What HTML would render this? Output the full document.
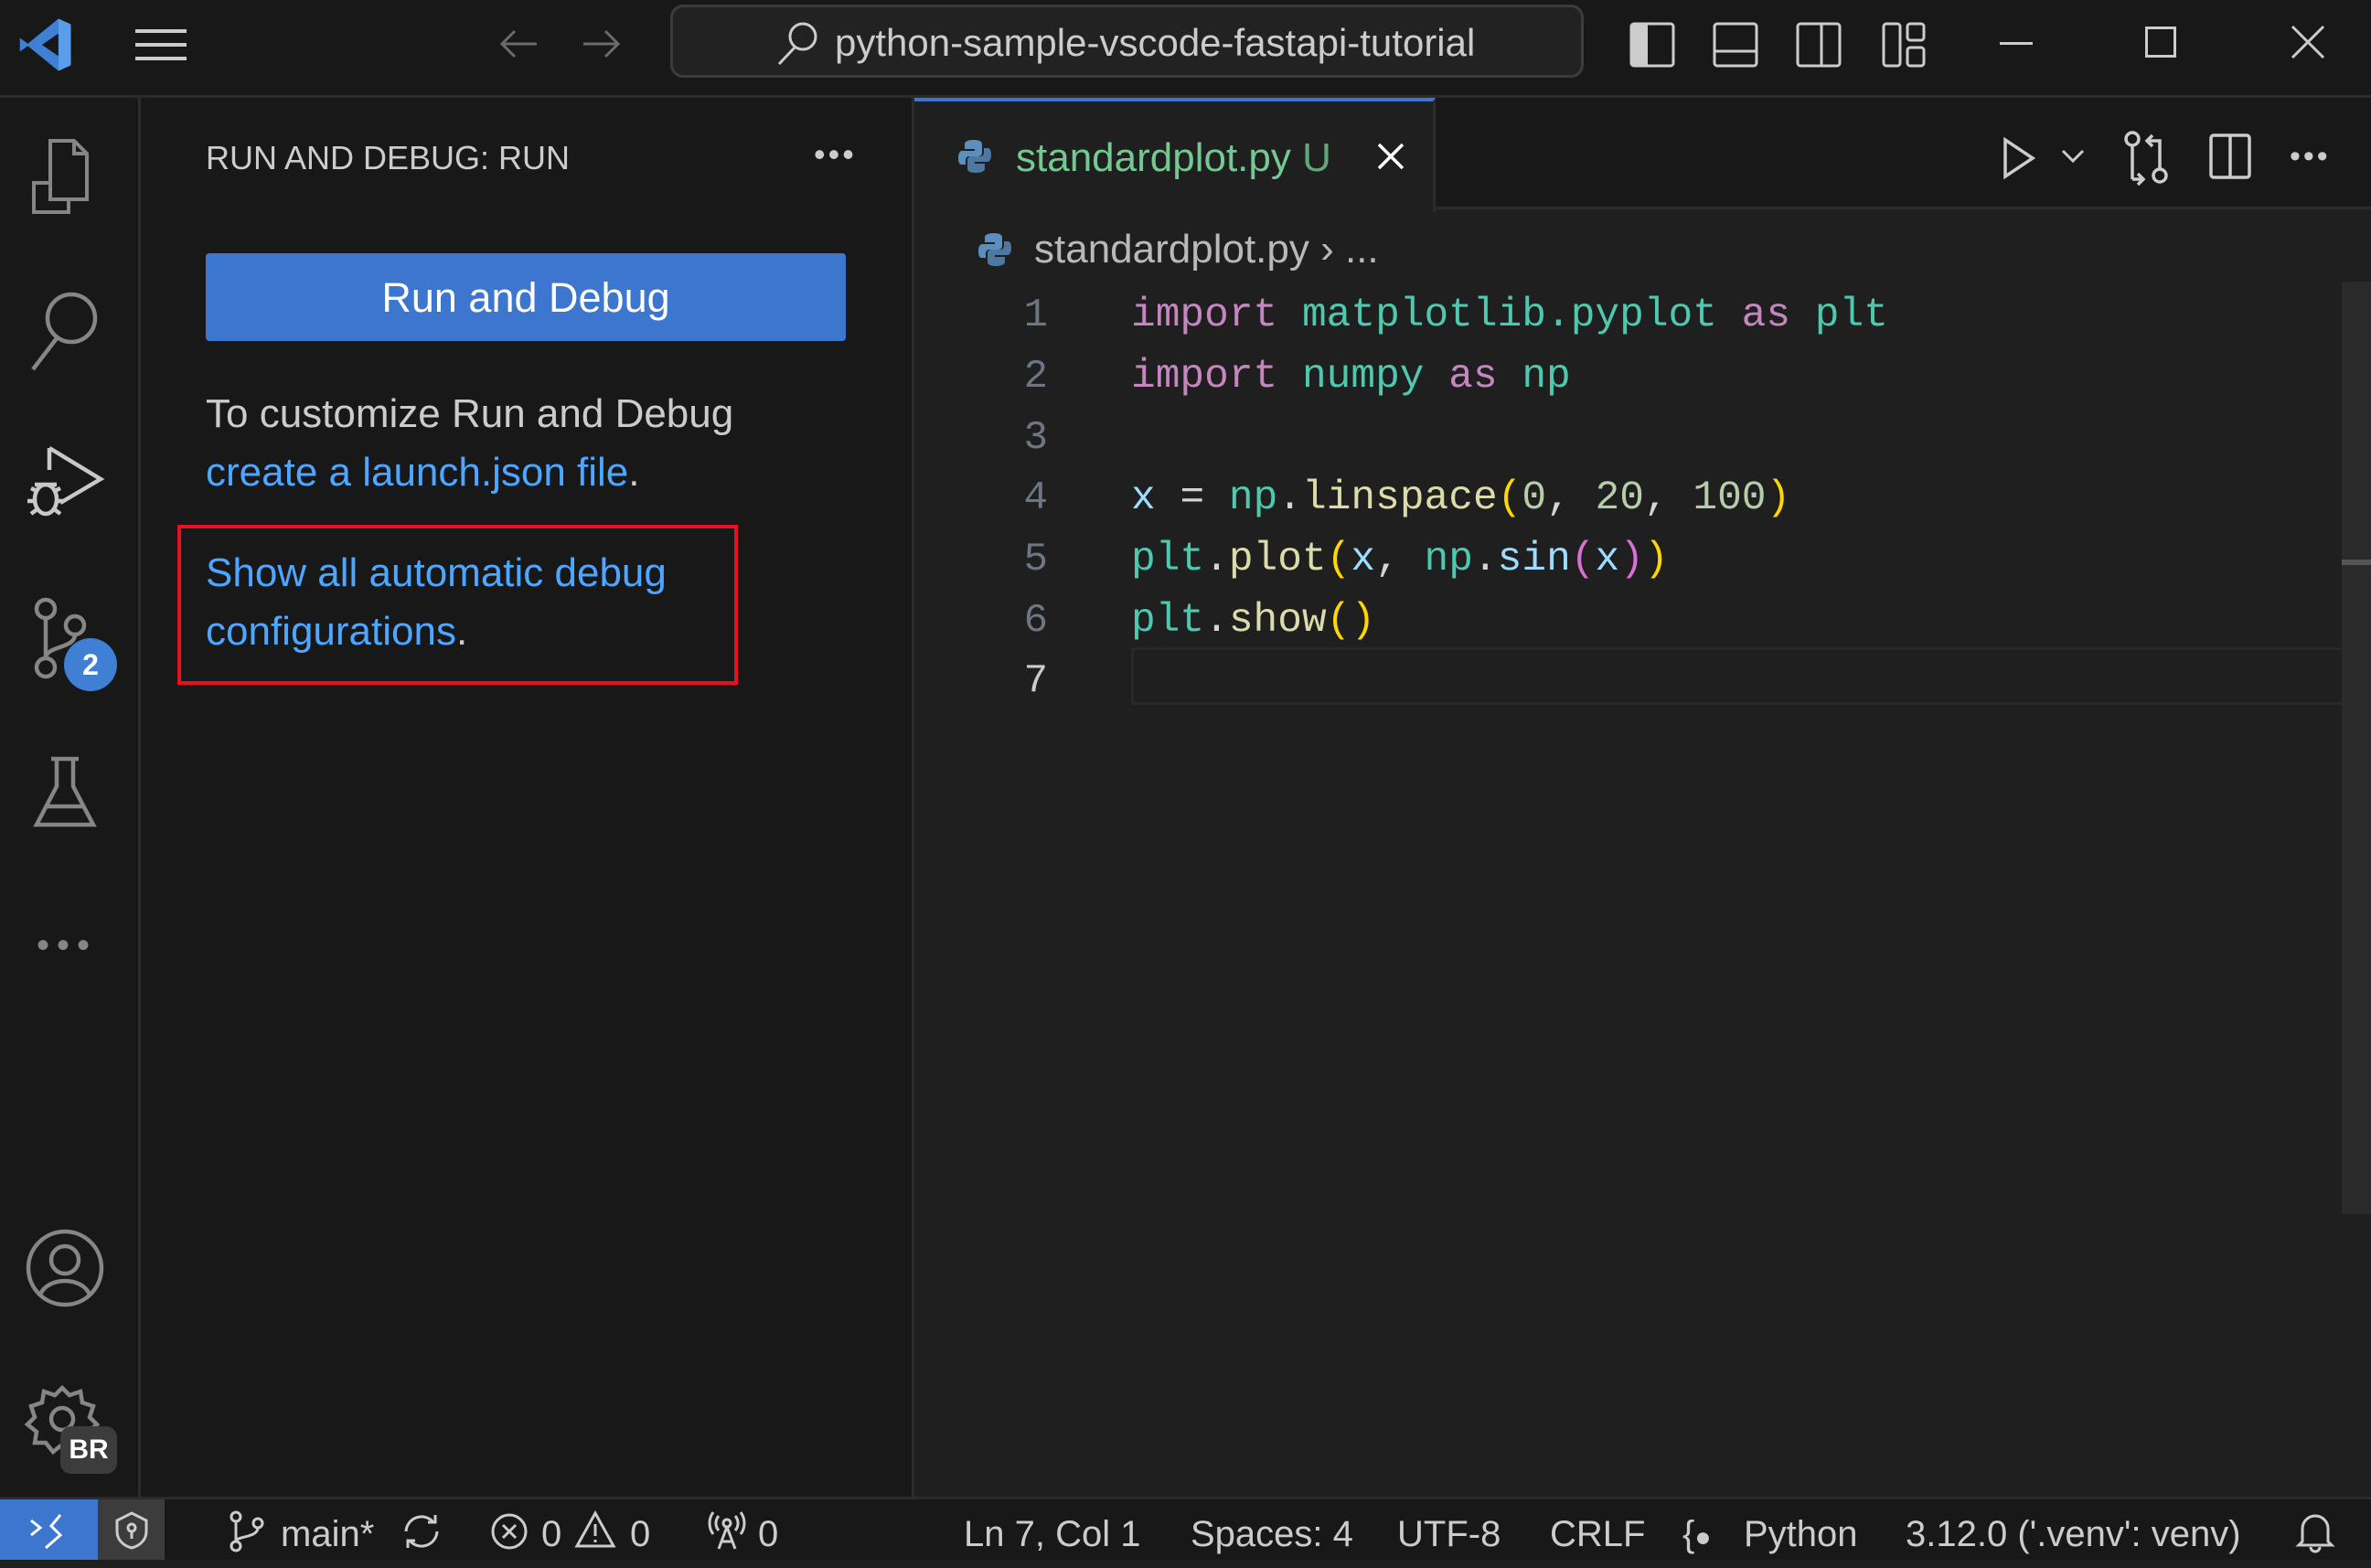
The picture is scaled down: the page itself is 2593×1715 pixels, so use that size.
<!DOCTYPE html>
<html><head><meta charset="utf-8"><style>
*{margin:0;padding:0;box-sizing:border-box}
body{width:2593px;height:1706px;background:#1f1f1f;position:relative;overflow:hidden;font-family:"Liberation Sans",sans-serif;color:#ccc}
.a{position:absolute}
.mono{font-family:"Liberation Mono","DejaVu Sans Mono",monospace;font-size:44.5px;white-space:pre}
.ln{position:absolute;left:1100px;width:46px;text-align:right;color:#6e7681;font-family:"Liberation Mono",monospace;font-size:44px}
.code{position:absolute;left:1237px}
.k{color:#c586c0}.m{color:#4ec9b0}.v{color:#9cdcfe}.f{color:#dcdcaa}.n{color:#b5cea8}.y{color:#ffd700}.p{color:#da70d6}.w{color:#d4d4d4}
svg{position:absolute;overflow:visible}
.st{position:absolute;top:1645px;height:66px;line-height:66px;font-size:40px;color:#ccc;white-space:nowrap}
</style></head><body>
<!-- title bar -->
<div class="a" style="left:0;top:0;width:2593px;height:107px;background:#181818;border-bottom:3px solid #2b2b2b"></div>
<svg style="left:18px;top:18px" width="62" height="62" viewBox="0 0 100 100"><path d="M74 4 L96 14 V86 L74 96 L20 52 L6 62 V38 L20 48 Z" fill="#3f7fd4"/><path d="M74 4 L96 14 V86 L74 96 Z" fill="#5a9de8"/><path d="M74 30 V70 L45 50 Z" fill="#181818"/></svg>
<div class="a" style="left:148px;top:32px;width:56px;height:4px;background:#ccc;box-shadow:0 15px 0 #ccc,0 30px 0 #ccc"></div>
<svg style="left:545px;top:28px" width="44" height="40"><path d="M42 20 H4 M18 6 L4 20 L18 34" stroke="#6b6b6b" stroke-width="3" fill="none"/></svg>
<svg style="left:636px;top:28px" width="44" height="40"><path d="M2 20 H40 M26 6 L40 20 L26 34" stroke="#6b6b6b" stroke-width="3" fill="none"/></svg>
<div class="a" style="left:733px;top:5px;width:999px;height:80px;border:3px solid #3c3c3c;border-radius:14px;background:#222"></div>
<svg style="left:848px;top:22px" width="48" height="50"><circle cx="30" cy="18" r="14" stroke="#ccc" stroke-width="3" fill="none"/><path d="M21 30 L4 48" stroke="#ccc" stroke-width="3"/></svg>
<div class="a" style="left:913px;top:23px;font-size:42px;color:#ccc">python-sample-vscode-fastapi-tutorial</div>
<svg style="left:1782px;top:24px" width="50" height="50"><rect x="2" y="2" width="46" height="46" rx="3" stroke="#ccc" stroke-width="3" fill="none"/><rect x="2" y="2" width="18" height="46" fill="#ccc"/></svg>
<svg style="left:1873px;top:24px" width="50" height="50"><rect x="2" y="2" width="46" height="46" rx="3" stroke="#ccc" stroke-width="3" fill="none"/><path d="M2 32 H48" stroke="#ccc" stroke-width="3"/></svg>
<svg style="left:1964px;top:24px" width="50" height="50"><rect x="2" y="2" width="46" height="46" rx="3" stroke="#ccc" stroke-width="3" fill="none"/><path d="M28 2 V48" stroke="#ccc" stroke-width="3"/></svg>
<svg style="left:2058px;top:24px" width="50" height="50"><rect x="2" y="2" width="18" height="46" rx="3" stroke="#ccc" stroke-width="3" fill="none"/><rect x="28" y="2" width="18" height="18" rx="3" stroke="#ccc" stroke-width="3" fill="none"/><rect x="28" y="28" width="18" height="20" rx="3" stroke="#ccc" stroke-width="3" fill="none"/></svg>
<div class="a" style="left:2187px;top:46px;width:36px;height:3px;background:#ccc"></div>
<div class="a" style="left:2346px;top:29px;width:34px;height:34px;border:3px solid #ccc"></div>
<svg style="left:2505px;top:27px" width="38" height="38"><path d="M2 2 L36 36 M36 2 L2 36" stroke="#ccc" stroke-width="3"/></svg>

<!-- activity bar -->
<div class="a" style="left:0;top:107px;width:154px;height:1533px;background:#181818;border-right:3px solid #2b2b2b"></div>
<svg style="left:33px;top:148px" width="76" height="90" viewBox="0 0 76 86" fill="none" stroke="#868686" stroke-width="4"><path d="M22 50 H4 V82 H42 V70"/><path d="M22 4 H48 L62 18 V68 H22 Z"/><path d="M48 4 V18 H62"/></svg>
<svg style="left:30px;top:318px" width="80" height="90" fill="none" stroke="#868686" stroke-width="4.5"><circle cx="48" cy="30" r="26"/><path d="M32 52 L6 86"/></svg>
<svg style="left:26px;top:484px" width="90" height="90" fill="none" stroke="#c8c8c8" stroke-width="4.5"><path d="M28 6 L84 40 L40 66"/><path d="M28 6 V30"/><ellipse cx="24" cy="62" rx="12" ry="16"/><path d="M8 50 L16 54 M40 50 L32 54 M4 64 H12 M36 64 H44 M8 78 L16 72 M40 78 L32 72 M12 46 H36"/></svg>
<svg style="left:36px;top:654px" width="60" height="90" fill="none" stroke="#868686" stroke-width="4.5"><circle cx="14" cy="12" r="10"/><circle cx="14" cy="76" r="10"/><circle cx="46" cy="30" r="10"/><path d="M14 22 V66 M46 40 C46 56 14 52 14 66"/></svg>
<div class="a" style="left:70px;top:698px;width:58px;height:58px;border-radius:50%;background:#3f7fd4;color:#fff;font-size:32px;text-align:center;line-height:58px;font-weight:bold">2</div>
<svg style="left:36px;top:826px" width="70" height="80" fill="none" stroke="#868686" stroke-width="4.5"><path d="M20 4 H50 M26 4 V34 L4 76 H66 L44 34 V4 M14 56 H56"/></svg>
<div class="a" style="left:40px;top:1012px;font-size:40px;color:#868686;letter-spacing:8px">•••</div>
<svg style="left:28px;top:1344px" width="86" height="86" fill="none" stroke="#868686" stroke-width="4.5"><circle cx="43" cy="43" r="40"/><circle cx="43" cy="34" r="15"/><path d="M16 72 C24 52 62 52 70 72"/></svg>
<svg style="left:28px;top:1512px" width="86" height="86" fill="none" stroke="#868686" stroke-width="4.5"><circle cx="40" cy="40" r="12"/><path d="M40 6 L48 14 L60 10 L62 22 L74 26 L70 38 L78 46 L68 54 L70 66 L58 66 L50 76 L40 68 L30 76 L22 66 L10 66 L12 54 L2 46 L10 38 L6 26 L18 22 L20 10 L32 14 Z"/></svg>
<div class="a" style="left:66px;top:1560px;width:62px;height:52px;border-radius:12px;background:#3c3c3c;color:#fff;font-size:30px;font-weight:bold;text-align:center;line-height:52px">BR</div>

<!-- sidebar -->
<div class="a" style="left:154px;top:107px;width:846px;height:1533px;background:#181818;border-right:3px solid #2b2b2b"></div>
<div class="a" style="left:225px;top:152px;font-size:36px;color:#ccc">RUN AND DEBUG: RUN</div>
<div class="a" style="left:890px;top:148px;font-size:36px;color:#ccc;letter-spacing:3px">•••</div>
<div class="a" style="left:225px;top:277px;width:700px;height:96px;background:#3d76cf;border-radius:4px;color:#fff;font-size:45px;text-align:center;line-height:98px">Run and Debug</div>
<div class="a" style="left:225px;top:421px;font-size:44px;color:#ccc;line-height:64px">To customize Run and Debug<br><span style="color:#4da6ff">create a launch.json file</span>.</div>
<div class="a" style="left:194px;top:574px;width:613px;height:175px;border:4px solid #e81123"></div>
<div class="a" style="left:225px;top:595px;font-size:44px;color:#4da6ff;line-height:64px">Show all automatic debug<br>configurations<span style="color:#ccc">.</span></div>

<!-- tab bar -->
<div class="a" style="left:1000px;top:107px;width:1593px;height:122px;background:#181818;border-bottom:3px solid #2b2b2b"></div>
<div class="a" style="left:1000px;top:107px;width:570px;height:125px;background:#1f1f1f;border-top:4px solid #3d76cf;border-right:3px solid #2b2b2b"></div>
<svg style="left:1048px;top:152px" width="36" height="38" viewBox="0 0 36 38"><path d="M17 1 C6 1 7 6 7 6 V11 H18 V13 H4 C4 13 0 13 0 21 C0 29 4 28 4 28 H8 V23 C8 23 8 19 12 19 H22 C22 19 26 19 26 15 V6 C26 6 27 1 17 1 Z" fill="#5a8fbf"/><path d="M19 37 C30 37 29 32 29 32 V27 H18 V25 H32 C32 25 36 25 36 17 C36 9 32 10 32 10 H28 V15 C28 15 28 19 24 19 H14 C14 19 10 19 10 23 V32 C10 32 9 37 19 37 Z" fill="#5a8fbf" opacity=".8"/></svg>
<div class="a" style="left:1111px;top:148px;font-size:44px;color:#73c991">standardplot.py <span style="color:#73c991;opacity:.8">U</span></div>
<svg style="left:1506px;top:156px" width="30" height="30"><path d="M2 2 L28 28 M28 2 L2 28" stroke="#fff" stroke-width="3.5"/></svg>
<svg style="left:2190px;top:150px" width="36" height="46"><path d="M3 3 L33 23 L3 43 Z" stroke="#ccc" stroke-width="3.5" fill="none"/></svg>
<svg style="left:2254px;top:163px" width="26" height="16"><path d="M2 2 L13 13 L24 2" stroke="#ccc" stroke-width="3" fill="none"/></svg>
<svg style="left:2322px;top:142px" width="52" height="60" fill="none" stroke="#ccc" stroke-width="3.5"><circle cx="10" cy="10" r="7"/><circle cx="40" cy="50" r="7"/><path d="M10 17 V54 M40 43 V12 H26 M32 6 L26 12 L32 18 M10 54 H22 M16 48 L22 54 L16 60"/></svg>
<svg style="left:2416px;top:146px" width="46" height="50"><rect x="2" y="2" width="42" height="46" rx="3" stroke="#ccc" stroke-width="3.5" fill="none"/><path d="M23 2 V48" stroke="#ccc" stroke-width="3.5"/></svg>
<div class="a" style="left:2504px;top:152px;font-size:34px;color:#ccc;letter-spacing:3px">•••</div>

<!-- breadcrumb -->
<svg style="left:1070px;top:254px" width="36" height="38" viewBox="0 0 36 38"><path d="M17 1 C6 1 7 6 7 6 V11 H18 V13 H4 C4 13 0 13 0 21 C0 29 4 28 4 28 H8 V23 C8 23 8 19 12 19 H22 C22 19 26 19 26 15 V6 C26 6 27 1 17 1 Z" fill="#5a8fbf"/><path d="M19 37 C30 37 29 32 29 32 V27 H18 V25 H32 C32 25 36 25 36 17 C36 9 32 10 32 10 H28 V15 C28 15 28 19 24 19 H14 C14 19 10 19 10 23 V32 C10 32 9 37 19 37 Z" fill="#5a8fbf" opacity=".8"/></svg>
<div class="a" style="left:1131px;top:248px;font-size:44px;color:#b9b9b9">standardplot.py <span>›</span> ...</div>

<!-- code -->
<div class="a" style="left:1237px;top:708px;width:1340px;height:63px;border:3px solid #282828;border-right:none"></div>
<div class="ln" style="top:320px">1</div>
<div class="ln" style="top:387px">2</div>
<div class="ln" style="top:454px">3</div>
<div class="ln" style="top:520px">4</div>
<div class="ln" style="top:587px">5</div>
<div class="ln" style="top:654px">6</div>
<div class="ln" style="top:720px;color:#ccc">7</div>
<div class="code mono" style="top:320px"><span class="k">import</span> <span class="m">matplotlib.pyplot</span> <span class="k">as</span> <span class="m">plt</span></div>
<div class="code mono" style="top:387px"><span class="k">import</span> <span class="m">numpy</span> <span class="k">as</span> <span class="m">np</span></div>
<div class="code mono" style="top:520px"><span class="v">x</span> <span class="w">=</span> <span class="m">np</span><span class="w">.</span><span class="f">linspace</span><span class="y">(</span><span class="n">0</span><span class="w">, </span><span class="n">20</span><span class="w">, </span><span class="n">100</span><span class="y">)</span></div>
<div class="code mono" style="top:587px"><span class="m">plt</span><span class="w">.</span><span class="f">plot</span><span class="y">(</span><span class="v">x</span><span class="w">, </span><span class="m">np</span><span class="w">.</span><span class="v">sin</span><span class="p">(</span><span class="v">x</span><span class="p">)</span><span class="y">)</span></div>
<div class="code mono" style="top:654px"><span class="m">plt</span><span class="w">.</span><span class="f">show</span><span class="y">()</span></div>
<!-- scrollbar -->
<div class="a" style="left:2561px;top:308px;width:32px;height:1020px;background:#2a2a2a"></div>
<div class="a" style="left:2561px;top:612px;width:32px;height:6px;background:#555"></div>

<!-- status bar -->
<div class="a" style="left:0;top:1637px;width:2593px;height:69px;background:#181818;border-top:3px solid #2b2b2b"></div>
<div class="a" style="left:0;top:1640px;width:107px;height:66px;background:#3d76cf"></div>
<svg style="left:30px;top:1653px" width="40" height="42" fill="none" stroke="#fff" stroke-width="3"><path d="M4 10 L14 18 L4 26 M36 4 L26 16 L36 26 L20 40"/></svg>
<div class="a" style="left:107px;top:1640px;width:73px;height:66px;background:#3c3c3c"></div>
<svg style="left:126px;top:1653px" width="36" height="42" fill="none" stroke="#ccc" stroke-width="3"><path d="M18 2 L34 10 V22 C34 32 26 38 18 40 C10 38 2 32 2 22 V10 Z"/><circle cx="18" cy="18" r="4"/><path d="M18 22 V30"/></svg>
<svg style="left:250px;top:1652px" width="40" height="46" fill="none" stroke="#ccc" stroke-width="3"><circle cx="8" cy="7" r="5"/><circle cx="8" cy="39" r="5"/><circle cx="32" cy="14" r="5"/><path d="M8 12 V34 M32 19 C32 30 8 28 8 34"/></svg>
<div class="st" style="left:307px">main*</div>
<svg style="left:436px;top:1655px" width="50" height="40" fill="none" stroke="#ccc" stroke-width="3"><path d="M8 20 A17 17 0 0 1 38 10 M42 20 A17 17 0 0 1 12 30 M32 10 H40 V2 M18 30 H10 V38"/></svg>
<svg style="left:536px;top:1654px" width="42" height="42" fill="none" stroke="#ccc" stroke-width="3"><circle cx="21" cy="21" r="18"/><path d="M14 14 L28 28 M28 14 L14 28"/></svg>
<div class="st" style="left:592px">0</div>
<svg style="left:628px;top:1652px" width="46" height="42" fill="none" stroke="#ccc" stroke-width="3"><path d="M23 3 L43 39 H3 Z M23 15 V28 M23 32 V35"/></svg>
<div class="st" style="left:689px">0</div>
<svg style="left:772px;top:1652px" width="46" height="44" fill="none" stroke="#ccc" stroke-width="3"><circle cx="23" cy="14" r="4"/><path d="M14 6 A12 12 0 0 0 14 22 M32 6 A12 12 0 0 1 32 22 M8 2 A20 20 0 0 0 8 26 M38 2 A20 20 0 0 1 38 26 M23 18 L14 42 M23 18 L32 42 M17 34 H29"/></svg>
<div class="st" style="left:829px">0</div>
<div class="st" style="left:1054px">Ln 7, Col 1</div>
<div class="st" style="left:1302px">Spaces: 4</div>
<div class="st" style="left:1528px">UTF-8</div>
<div class="st" style="left:1695px">CRLF</div>
<div class="st" style="left:1840px">{<span style="font-size:30px">●</span></div>
<div class="st" style="left:1907px">Python</div>
<div class="st" style="left:2084px">3.12.0 ('.venv': venv)</div>
<svg style="left:2512px;top:1654px" width="40" height="44" fill="none" stroke="#ccc" stroke-width="3"><path d="M6 32 V18 A14 14 0 0 1 34 18 V32 L38 36 H2 Z M15 38 A5 5 0 0 0 25 38"/></svg>
</body></html>
